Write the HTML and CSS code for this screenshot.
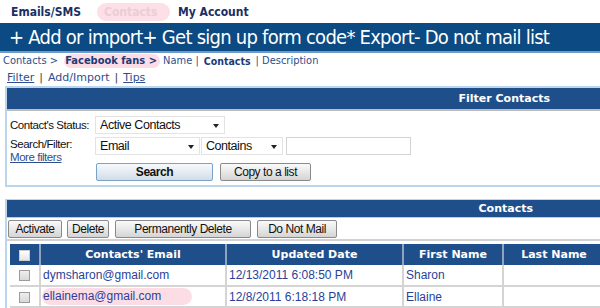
FILE: index.html
```html
<!DOCTYPE html>
<html>
<head>
<meta charset="utf-8">
<link rel="stylesheet" href="styles.css">
</head>
<body>
<div class="topnav">
  <span class="nav-item n1">Emails/SMS</span>
  <span class="nav-item nav-hl">Contacts</span>
  <span class="nav-item">My Account</span>
</div>
<div class="banner">+ Add or import+ Get sign up form code* Export- Do not mail list</div>
<div class="crumbs">
  <span>Contacts &gt; </span><span class="crumb-hl">Facebook fans &gt;</span><span class="cname"> Name |</span><b class="cb2">Contacts</b><span class="cdesc">| Description</span>
</div>
<div class="sublinks">
  <a class="ulink">Filter</a><span class="sep">|</span><a>Add/Import</a><span class="sep">|</span><a class="ulink">Tips</a>
</div>

<div class="panel filter">
  <div class="panel-head fh">Filter Contacts</div>
  <div class="filter-body">
    <div class="frow">
      <span class="flabel">Contact's Status:</span>
      <span class="sel sel-status">Active Contacts<i class="arrow"></i></span>
    </div>
    <div class="frow frow2">
      <div class="flabel">Search/Filter:<br><a class="more">More filters</a></div>
      <div class="fcol">
        <div class="fline">
          <span class="sel sel-field">Email<i class="arrow"></i></span>
          <span class="sel sel-op">Contains<i class="arrow"></i></span>
          <span class="tinput"></span>
        </div>
        <div class="fline btns">
          <span class="btn btn-search">Search</span>
          <span class="btn btn-copy">Copy to a list</span>
        </div>
      </div>
    </div>
  </div>
</div>

<div class="panel contacts">
  <div class="panel-head ch">Contacts</div>
  <div class="actions">
    <span class="btn a1">Activate</span>
    <span class="btn a2">Delete</span>
    <span class="btn a3">Permanently Delete</span>
    <span class="btn a4">Do Not Mail</span>
  </div>
  <table class="grid">
    <tr class="thead">
      <th class="c0"><span class="cb cb-h"></span></th>
      <th class="c1">Contacts' Email</th>
      <th class="c2">Updated Date</th>
      <th class="c3">First Name</th>
      <th class="c4">Last Name</th>
    </tr>
    <tr>
      <td class="c0"><span class="cb"></span></td>
      <td>dymsharon@gmail.com</td>
      <td>12/13/2011 6:08:50 PM</td>
      <td>Sharon</td>
      <td></td>
    </tr>
    <tr>
      <td class="c0"><span class="cb"></span></td>
      <td><span class="email-hl">ellainema@gmail.com</span></td>
      <td>12/8/2011 6:18:18 PM</td>
      <td>Ellaine</td>
      <td></td>
    </tr>
    <tr class="last">
      <td class="c0"></td><td></td><td></td><td></td><td></td>
    </tr>
  </table>
</div>
</body>
</html>
```
FILE: styles.css
```css
* { box-sizing: border-box; }
html, body { margin: 0; padding: 0; background: #fff; overflow: hidden; }
body { width: 600px; height: 308px; font-family: "DejaVu Sans", Verdana, sans-serif; }

.topnav {
  height: 23px;
  display: flex;
  align-items: center;
  padding-left: 11px;
  font-family: "DejaVu Sans Condensed", "DejaVu Sans", sans-serif;
  font-size: 12px;
  font-weight: bold;
  color: #1b2f63;
}
.n1 { margin-right: 16px; }
.nav-hl {
  color: #ecccd7;
  background: #fde0e7;
  border-radius: 9px;
  height: 18px;
  line-height: 18px;
  width: 73px;
  padding-left: 7px;
  margin-right: 8px;
}

.banner {
  height: 30px;
  background: #0b4a82;
  border-bottom: 2px solid #6c9acb;
  color: #fff;
  font-family: "DejaVu Sans Condensed", "DejaVu Sans", sans-serif;
  font-size: 20px;
  letter-spacing: -0.75px;
  line-height: 28px;
  padding-left: 9px;
  white-space: nowrap;
}

.crumbs {
  font-family: "DejaVu Sans Condensed", "DejaVu Sans", sans-serif;
  font-size: 11px;
  color: #2d4f8f;
  padding-left: 3px;
  height: 16px;
  line-height: 14px;
  white-space: nowrap;
  display: flex;
  align-items: center;
}
.crumbs span, .crumbs b { white-space: pre; }
.crumb-hl {
  font-weight: bold;
  color: #1d3a78;
  background: #fcdde5;
  border-radius: 7px;
  height: 14px;
  padding: 0 3px 0 1px;
  margin-left: 3px;
}
.cb2 { color: #1d3a78; font-size: 10.5px; margin-left: 5px; }
.cdesc { margin-left: 5px; }

.sublinks {
  font-size: 11px;
  color: #2d4f8f;
  padding-left: 7px;
  height: 17px;
  line-height: 18px;
  white-space: nowrap;
}
.sublinks a { color: #2d4f8f; }
.ulink { text-decoration: underline; }
.sep { color: #444; margin: 0 5px 0 5px; }

.panel {
  margin-left: 5px;
  border: 2px solid #bad5ec;
  border-right: none;
}
.filter { height: 101px; }
.panel-head {
  background: #1f4f8b;
  color: #fff;
  font-weight: bold;
  font-size: 11px;
  text-align: right;
}
.fh {
  height: 23px;
  line-height: 21px;
  border-bottom: 2px solid #bdbdbd;
  padding-right: 50px;
}

.filter-body {
  font-family: "Liberation Sans", Arial, sans-serif;
  font-size: 11.5px;
  letter-spacing: -0.45px;
  color: #111;
  padding: 5px 0 0 3px;
}
.frow { display: flex; align-items: center; height: 18px; }
.flabel { width: 85px; white-space: nowrap; }
.frow2 { align-items: flex-start; height: auto; margin-top: 3px; }
.frow2 .flabel { line-height: 13px; padding-top: 1px; }
.more { color: #2d4f8f; text-decoration: underline; }
.fcol { display: flex; flex-direction: column; }
.fline { display: flex; align-items: center; }

.sel {
  position: relative;
  display: inline-block;
  height: 18px;
  line-height: 16px;
  border: 1px solid #e3e3e3;
  padding-left: 4px;
  background: #fff;
  font-size: 12.5px;
  color: #111;
}
.arrow {
  position: absolute;
  right: 5px;
  top: 7px;
  width: 0; height: 0;
  border-left: 3px solid transparent;
  border-right: 3px solid transparent;
  border-top: 4px solid #222;
}
.sel-status { width: 130px; }
.sel-field { width: 105px; }
.sel-op { width: 82px; margin-left: 1px; }
.tinput {
  display: inline-block;
  width: 125px;
  height: 18px;
  border: 1px solid #d4d4d4;
  margin-left: 3px;
}

.btns { margin-top: 8px; margin-left: 1px; }
.btn {
  display: inline-block;
  height: 18px;
  line-height: 16px;
  border: 1px solid #8a8a8a;
  border-radius: 2px;
  background: linear-gradient(#fafafa, #e6e6e6 55%, #d4d4d4);
  font-family: "Liberation Sans", Arial, sans-serif;
  font-size: 12px;
  letter-spacing: -0.45px;
  color: #111;
  text-align: center;
}
.btn-search { width: 117px; font-weight: bold; border-color: #7aa3cc; background: linear-gradient(#f6f9fc, #e4eaf1 55%, #d2dbe5); }
.btn-copy { width: 91px; margin-left: 7px; }

.contacts { margin-top: 12px; border-top-width: 1px; border-bottom: none; }
.ch {
  height: 18px;
  line-height: 17px;
  border-bottom: 1px solid #c8c8c8;
  padding-right: 67px;
}
.actions {
  display: flex;
  padding: 2px 0 0 1px;
  height: 23px;
  border-bottom: 2px solid #d2d2d2;
}
.a1 { width: 54px; }
.a2 { width: 42px; margin-left: 5px; }
.a3 { width: 136px; margin-left: 6px; }
.a4 { width: 80px; margin-left: 6px; }

.grid {
  border-collapse: collapse;
  margin: 3px 0 0 3px;
  width: 595px;
  font-family: "Liberation Sans", Arial, sans-serif;
  font-size: 12px;
  table-layout: fixed;
}
.grid th {
  background: #1f4f8b;
  color: #fff;
  font-family: "DejaVu Sans", Verdana, sans-serif;
  font-size: 11px;
  font-weight: bold;
  height: 21px;
  border-left: 2px solid #8fa3bd;
  padding: 0;
}
.grid th.c0 { border-left: none; }
.grid td {
  height: 21px;
  border: 2px solid #d4d4d4;
  border-top: none;
  color: #2a3f99;
  padding: 0 0 0 2px;
  white-space: nowrap;
}
.grid td.c0 { border-left: none; text-align: center; padding: 0; }
.grid tr.last td { height: 6px; }
.c0 { width: 30px; }
.c1 { width: 186px; }
.c2 { width: 177px; }
.c3 { width: 100px; }
.cb {
  display: inline-block;
  width: 11px; height: 11px;
  border: 1px solid #9b9b9b;
  background: linear-gradient(#eee, #d8d8d8);
  vertical-align: middle;
}
.cb-h { border-color: #ccc; background: linear-gradient(#fff, #e6e6e6); }
.email-hl {
  display: inline-block;
  background: #fcdde6;
  border-radius: 9px;
  height: 17px;
  line-height: 17px;
  width: 150px;
  margin-left: -1px;
  padding-left: 1px;
}
```
